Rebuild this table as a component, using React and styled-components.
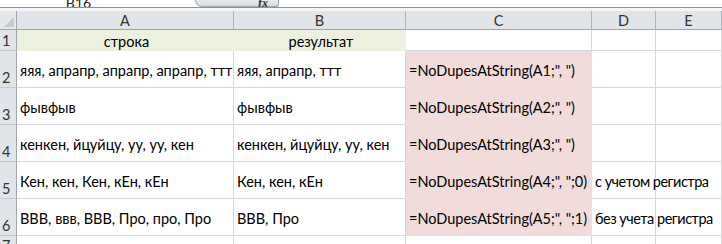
import React from "react";
import styled, { createGlobalStyle } from "styled-components";

const GlobalStyle = createGlobalStyle`
  html, body {
    margin: 0;
    padding: 0;
    background: #ffffff;
  }
  body {
    font-family: Lato, "Liberation Sans", sans-serif;
    width: 722px;
    height: 244px;
    overflow: hidden;
  }
`;

const COLS = [17, 217, 172, 186, 64, 66];

const FormulaStrip = styled.div`
  display: flex;
  height: 7px;
  overflow: hidden;
  border-bottom: 1px solid #8d9298;
`;

const NameBox = styled.div`
  width: 195px;
  display: flex;
  justify-content: center;
  align-items: flex-end;
  font-size: 14px;
  line-height: 8px;
  color: #222;
  padding-right: 38px;
  box-sizing: border-box;
`;

const FxButton = styled.div`
  width: 84px;
  height: 7px;
  box-sizing: border-box;
  background: linear-gradient(#e9ebee, #d4d8de);
  border: 1px solid #a7adb5;
  border-top: none;
  border-radius: 0 0 4px 10px;
  display: flex;
  justify-content: flex-end;
  align-items: flex-end;
  padding-right: 10px;
  font-family: "Liberation Serif", serif;
  font-style: italic;
  font-weight: bold;
  font-size: 12px;
  line-height: 6px;
  color: #333;
`;

const Gap = styled.div`
  height: 3px;
  background: #f4f5f7;
`;

const Sheet = styled.div`
  display: grid;
  grid-template-columns: ${COLS.map((c) => c + "px").join(" ")};
  grid-template-rows: 19px 21px 37px 37px 37px 37px 37px 20px;
`;

const Corner = styled.div`
  background: #e4e7eb;
  border-right: 1px solid #9ea5ad;
  border-bottom: 1px solid #9ea5ad;
  position: relative;
  &::after {
    content: "";
    position: absolute;
    right: 2px;
    bottom: 2px;
    width: 0;
    height: 0;
    border-left: 10px solid transparent;
    border-bottom: 10px solid #c4c9cf;
  }
`;

const ColHead = styled.div`
  background: #e1e4e8;
  border-right: 1px solid #aeb4bb;
  border-bottom: 1px solid #9ea5ad;
  display: flex;
  align-items: center;
  justify-content: center;
  font-size: 14.5px;
  color: #333;
`;

const RowHead = styled.div`
  background: #e1e4e8;
  border-right: 1px solid #9ea5ad;
  border-bottom: 1px solid #c5cad0;
  display: flex;
  align-items: flex-end;
  padding-left: 2px;
  padding-bottom: 1px;
  font-size: 14.5px;
  line-height: 17px;
  color: #333;
`;

const Cell = styled.div`
  background: ${(p) => p.$bg || "#ffffff"};
  border-right: 1px solid ${(p) => (p.$bg ? p.$bg : "#d8d8d8")};
  border-bottom: 1px solid ${(p) => (p.$bg ? p.$bg : "#d8d8d8")};
  display: flex;
  align-items: center;
  justify-content: ${(p) => (p.$center ? "center" : "flex-start")};
  padding: 2px 0 0 3px;
  font-size: 14.5px;
  line-height: 17px;
  letter-spacing: ${(p) => (p.$note ? "-0.5px" : "0")};
  color: #000;
  white-space: nowrap;
  overflow: ${(p) => (p.$clip ? "hidden" : "visible")};
  position: relative;
  z-index: ${(p) => (p.$note ? 1 : 0)};
`;

const HEADER_GREEN = "#ebf1de";
const PINK = "#f2dcdb";

const rows = [
  ["яяя, апрапр, апрапр, апрапр, ттт", "яяя, апрапр, ттт", '=NoDupesAtString(A1;", ")', ""],
  ["фывфыв", "фывфыв", '=NoDupesAtString(A2;", ")', ""],
  ["кенкен, йцуйцу, уу, уу, кен", "кенкен, йцуйцу, уу, кен", '=NoDupesAtString(A3;", ")', ""],
  ["Кен, кен, Кен, кЕн, кЕн", "Кен, кен, кЕн", '=NoDupesAtString(A4;", ";0)', "с учетом регистра"],
  ["ВВВ, ввв, ВВВ, Про, про, Про", "ВВВ, Про", '=NoDupesAtString(A5;", ";1)', "без учета регистра"],
];

export default function App() {
  return (
    <>
      <GlobalStyle />
      <FormulaStrip>
        <NameBox>B16</NameBox>
        <FxButton>fx</FxButton>
      </FormulaStrip>
      <Gap />
      <Sheet>
        <Corner />
        {["A", "B", "C", "D", "E"].map((c) => (
          <ColHead key={c}>{c}</ColHead>
        ))}

        <RowHead>1</RowHead>
        <Cell $bg={HEADER_GREEN} $center>строка</Cell>
        <Cell $bg={HEADER_GREEN} $center>результат</Cell>
        <Cell />
        <Cell />
        <Cell />

        {rows.map((r, i) => (
          <React.Fragment key={i}>
            <RowHead>{i + 2}</RowHead>
            <Cell $clip>{r[0]}</Cell>
            <Cell $clip>{r[1]}</Cell>
            <Cell $bg={PINK}>{r[2]}</Cell>
            <Cell $note>{r[3]}</Cell>
            <Cell />
          </React.Fragment>
        ))}

        <RowHead>7</RowHead>
        <Cell />
        <Cell />
        <Cell />
        <Cell />
        <Cell />
      </Sheet>
    </>
  );
}
